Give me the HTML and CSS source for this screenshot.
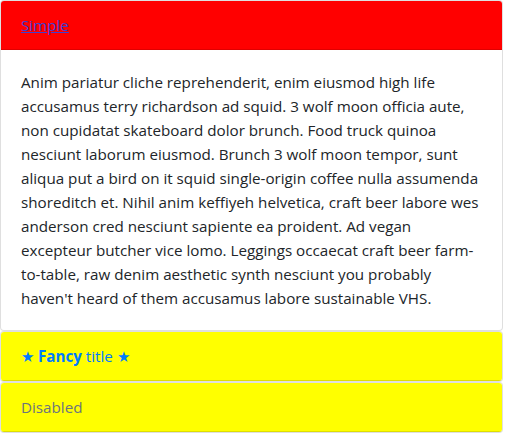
FILE: index.html
```html
<!DOCTYPE html>
<html lang="en">
<head>
    <meta charset="UTF-8">
    <meta name="viewport" content="width=device-width, initial-scale=1.0">
    <title>Accordion</title>
    <link rel="stylesheet" href="styles.css">
</head>
<body>
    <div class="accordion">
        <div class="card">
            <div class="card-header header-red">
                <a href="#" class="toggle toggle-active">Simple</a>
            </div>
            <div class="card-body">
                Anim pariatur cliche reprehenderit, enim eiusmod high life accusamus terry richardson ad squid. 3 wolf moon officia aute, non cupidatat skateboard dolor brunch. Food truck quinoa nesciunt laborum eiusmod. Brunch 3 wolf moon tempor, sunt aliqua put a bird on it squid single-origin coffee nulla assumenda shoreditch et. Nihil anim keffiyeh helvetica, craft beer labore wes anderson cred nesciunt sapiente ea proident. Ad vegan excepteur butcher vice lomo. Leggings occaecat craft beer farm-to-table, raw denim aesthetic synth nesciunt you probably haven't heard of them accusamus labore sustainable VHS.
            </div>
        </div>

        <div class="card">
            <div class="card-header header-yellow">
                <a href="#" class="toggle">&#9733; <b>Fancy</b> title &#9733;</a>
            </div>
        </div>

        <div class="card">
            <div class="card-header header-yellow">
                <span class="toggle disabled">Disabled</span>
            </div>
        </div>
    </div>
</body>
</html>
```

FILE: styles.css
```css
*{
    box-sizing: border-box;
}

body{
    margin: 0;
    font-family: "Segoe UI", "Open Sans", "Liberation Sans", sans-serif;
    font-size: 15.2px;
    line-height: 24px;
    color: #212529;
    background-color: #fff;
}

.accordion{
    margin-right: 2px;
}

.card{
    border: 1px solid rgba(0, 0, 0, 0.125);
    border-radius: 4px;
    overflow: hidden;
    background-color: #fff;
}

.card-header{
    padding: 12px 20px;
    border-bottom: 1px solid rgba(0, 0, 0, 0.125);
}

.header-red{
    background-color: red;
}

.header-yellow{
    background-color: yellow;
}

.card-body{
    padding: 20px;
}

.toggle{
    color: #007bff;
    text-decoration: none;
}

.toggle-active{
    color: #3f3fd0;
    text-decoration: underline;
}

.toggle b{
    font-weight: 700;
}

.disabled{
    color: #6c757d;
}
```
